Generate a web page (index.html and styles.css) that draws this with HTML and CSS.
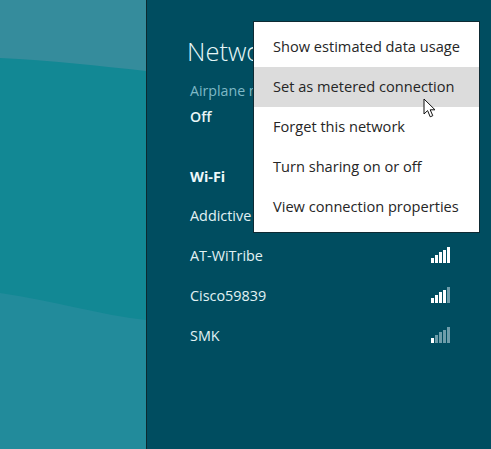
FILE: index.html
```html
<!DOCTYPE html>
<html lang="en">
<head>
<meta charset="utf-8">
<title>Networks</title>
<link rel="stylesheet" href="styles.css">
</head>
<body>
<div class="desktop">
  <svg class="wallpaper" viewBox="0 0 146 449" preserveAspectRatio="none" aria-hidden="true">
    <rect width="146" height="449" fill="#128894"/>
    <path d="M0 0H146V71C100 66 50 60 0 58Z" fill="#358c9c"/>
    <path d="M0 293C50 300 100 315 146 320V449H0Z" fill="#228b9b"/>
  </svg>
  <main class="panel">
    <h1 class="title">Networks</h1>
    <div class="airplane">
      <div class="label">Airplane mode</div>
      <div class="state">Off</div>
    </div>
    <h2 class="section">Wi-Fi</h2>
    <ul class="networks">
      <li class="network"><span>Addictive</span></li>
      <li class="network"><span>AT-WiTribe</span>
        <svg class="signal" viewBox="0 0 20 17"><g fill="#fff"><rect x="0" y="11" width="3" height="5"/><rect x="4" y="8" width="3" height="8"/><rect x="8" y="5" width="3" height="11"/><rect x="12" y="3" width="3" height="13"/><rect x="16" y="0" width="3" height="16"/></g></svg></li>
      <li class="network"><span>Cisco59839</span>
        <svg class="signal" viewBox="0 0 20 17"><g fill="#fff"><rect x="0" y="11" width="3" height="5"/><rect x="4" y="8" width="3" height="8"/><rect x="8" y="5" width="3" height="11"/><rect x="12" y="3" width="3" height="13"/></g><rect x="16" y="0" width="3" height="16" fill="#6f9daa"/></svg></li>
      <li class="network"><span>SMK</span>
        <svg class="signal" viewBox="0 0 20 17"><rect x="0" y="11" width="3" height="5" fill="#fff"/><g fill="#6f9daa"><rect x="4" y="8" width="3" height="8"/><rect x="8" y="5" width="3" height="11"/><rect x="12" y="3" width="3" height="13"/><rect x="16" y="0" width="3" height="16"/></g></svg></li>
    </ul>
  </main>
  <ul class="menu">
    <li class="menu-item">Show estimated data usage</li>
    <li class="menu-item is-hover">Set as metered connection</li>
    <li class="menu-item">Forget this network</li>
    <li class="menu-item">Turn sharing on or off</li>
    <li class="menu-item">View connection properties</li>
  </ul>
  <svg class="cursor" viewBox="0 0 14 21" aria-hidden="true">
    <path d="M1 1V16L4.6 12.6L7.2 18.8L9.8 17.7L7.2 11.8H12Z" fill="#fff" stroke="#111" stroke-width="1"/>
  </svg>
</div>
</body>
</html>
```

FILE: styles.css
```css
* { box-sizing: border-box; }
html, body { margin: 0; padding: 0; }
body { font-family: "Open Sans", "Noto Sans", "Liberation Sans", sans-serif; }
ul { list-style: none; margin: 0; padding: 0; }

.desktop {
  position: relative;
  display: flex;
  width: 491px;
  height: 449px;
  overflow: hidden;
  background: #004d60;
}
.wallpaper { flex: 0 0 146px; width: 146px; height: 449px; display: block; }

.panel {
  flex: 1;
  border-left: 1px solid #0d2a30;
  padding: 33px 40px 0 43px;
  color: #fff;
  background: #004d60;
}
.title {
  margin: 0 0 0 -3px;
  font-size: 25.5px;
  line-height: 36px;
  font-weight: 300;
  color: #e6f7f8;
  white-space: nowrap;
}
.airplane { margin-top: 9px; font-size: 14.2px; line-height: 26px; }
.label { color: #7fb9c6; }
.state { font-weight: 600; color: #eaf6f7; }
.section {
  margin: 34px 0 0;
  font-size: 14.4px;
  line-height: 26px;
  font-weight: 700;
  color: #eef9fa;
}
.networks { margin-top: 6px; }
.network {
  display: flex;
  align-items: center;
  justify-content: space-between;
  height: 40px;
  padding-bottom: 1px;
  font-size: 14.4px;
  color: #e2f2f4;
}
.signal { width: 20px; height: 17px; display: block; }

.menu {
  position: absolute;
  left: 253px;
  top: 21px;
  width: 227px;
  height: 212px;
  padding: 5px 0;
  background: #fff;
  border: 1px solid #0e2a33;
}
.menu-item {
  height: 40px;
  padding: 0 0 3px 19px;
  display: flex;
  align-items: center;
  font-size: 14.6px;
  font-weight: 500;
  color: #262626;
  white-space: nowrap;
}
.is-hover { background: #dcdcdc; }

.cursor {
  position: absolute;
  left: 423px;
  top: 98px;
  width: 14px;
  height: 21px;
}
```
